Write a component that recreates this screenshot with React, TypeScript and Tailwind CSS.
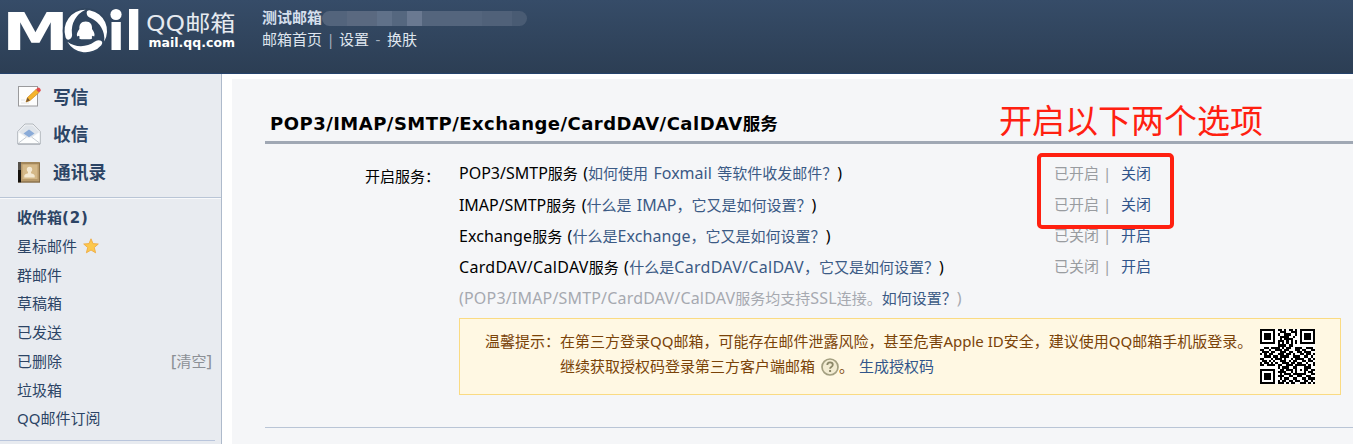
import React from "react";

const QR = [
  "1111111011010110101111111",
  "1000001001110011101000001",
  "1011101010011100101011101",
  "1011101001111001001011101",
  "1011101001011110001011101",
  "1000001011101010101000001",
  "1111111010101010101111111",
  "0000000011110110000000000",
  "0011011110101100111001110",
  "1100100111011000110110011",
  "0111011001110110011011100",
  "1010110011101101001101101",
  "0011101101111001110011010",
  "1100010111010010111100101",
  "0110101001110101100110110",
  "1011010100111011011001001",
  "1101111011001110111110101",
  "0000000010111001100011100",
  "1111111001101110101011011",
  "1000001011110010100010110",
  "1011101001011101111110011",
  "1011101011100110011001100",
  "1011101001011001100110111",
  "1000001010110110110011010",
  "1111111011101011001110101",
];

/** Mixed-script text: Latin runs get their own size next to the ideographs. */
function Mixed({ text, latin = "text-[16px]" }: { text: string; latin?: string }) {
  return (
    <>
      {text.split(/([\x21-\x7e]+(?: [\x21-\x7e]+)*)/).map((part, i) =>
        i % 2 === 1 ? (
          <span key={i} className={latin}>
            {part}
          </span>
        ) : (
          part
        ),
      )}
    </>
  );
}

function Logo() {
  const blade = "M1 -17.5 Q.6 -21 4.5 -20.6 A21 21 0 0 1 18.5 10.5 A23 23 0 0 0 5 -13 Q1.3 -14.2 1 -17.5Z";
  return (
    <svg width="252" height="60" viewBox="0 0 252 60" className="shrink-0 overflow-visible" fill="#fff">
      <g transform="translate(2 50) scale(1.32 1)">
        <text fontSize="51" fontWeight="700" fontFamily="DejaVu Sans">M</text>
      </g>
      <circle cx="85.7" cy="31" r="23" fill="#31465f" />
      <g transform="translate(85.7 31)">
        <path d={blade} />
        <path d={blade} transform="rotate(120)" />
        <path d={blade} transform="rotate(240)" />
        <path d="M0 -9.5 C4.8 -9.5 6.8 -6 6.3 -2 C8.3 0.5 9.5 3.5 8.5 5.5 L6.8 4.8 L6 6 C7.5 8.3 5 8.3 0 8.3 C-5 8.3 -7.5 8.3 -6 6 L-6.8 4.8 L-8.5 5.5 C-9.5 3.5 -8.3 0.5 -6.3 -2 C-6.8 -6 -4.8 -9.5 0 -9.5Z" />
      </g>
      <circle cx="116" cy="14.5" r="5.6" />
      <rect x="111.5" y="22" width="9.3" height="28" />
      <rect x="129" y="9" width="9.3" height="41" />
      <text x="146" y="30.5" fontSize="22" textLength="89.5" lengthAdjust="spacingAndGlyphs" fontFamily="Noto Sans, Noto Sans CJK SC, sans-serif" fill="#e6eaf0">QQ邮箱</text>
      <text x="148.5" y="47.3" fontSize="12.5" fontWeight="700" textLength="86.5" fontFamily="DejaVu Sans">mail.qq.com</text>
    </svg>
  );
}

function PencilIcon() {
  return (
    <svg width="24" height="24" viewBox="0 0 24 24">
      <rect x="1.5" y="1.5" width="19" height="19.5" fill="#fdfdfd" stroke="#9a9a9c" />
      <path d="M4 18H12M4 15H8" stroke="#e4e4e4" />
      <path d="M9 17 L10.5 12.5 L19 4.5 L22 7.5 L13 15.5Z" fill="#f5b42c" stroke="#cf8a22" strokeWidth=".7" />
      <path d="M9 17 L10.5 12.5 L13 15.5Z" fill="#7a5a35" />
      <path d="M19 4.5 L20.8 2.6 Q23.8 3 23.8 5.8 L22 7.5Z" fill="#e24b4b" />
    </svg>
  );
}

function EnvelopeIcon() {
  return (
    <svg width="24" height="24" viewBox="0 0 24 24">
      <path d="M.7 9.5 L8 2 H16 L23.3 9.5 V22 H.7Z" fill="#f1f3f5" stroke="#b3b8be" />
      <path d="M2 10 L8.5 3.5 H15.5 L22 10 L12 17Z" fill="#dfe4ea" />
      <path d="M1.5 10.5 L9 15.5 H15 L22.5 10.5 V21.5 H1.5Z" fill="#fff" fillOpacity=".85" />
      <path d="M1.5 21 L9.5 15 M22.5 21 L14.5 15" stroke="#c7cdd4" />
      <path d="M1 22H23" stroke="#9ea5ad" />
      <path d="M6.5 11.5 L12 7.5 L17.5 11.5 L12 15.3Z" fill="#8aabd8" />
    </svg>
  );
}

function ContactsIcon() {
  return (
    <svg width="24" height="24" viewBox="0 0 24 24">
      <rect x="1" y="2" width="22" height="20.5" fill="#b99b6c" />
      <rect x="1" y="2" width="3" height="20.5" fill="#15120e" />
      <rect x="1" y="2" width="3" height="8" fill="#56514a" />
      <path d="M4 3H22.5V22" fill="none" stroke="#8d744c" />
      <rect x="5.5" y="4.5" width="15" height="14.5" fill="#d4b888" />
      <circle cx="12.5" cy="9.5" r="2.7" fill="#f4e9d3" />
      <path d="M7.3 17.5 V15.5 Q7.5 14 11 13.3 V11 H14 V13.3 Q17.5 14 17.7 15.5 V17.5Z" fill="#f4e9d3" />
      <path d="M4 22H23" stroke="#776141" />
    </svg>
  );
}

function Star() {
  return (
    <svg width="16" height="16" viewBox="0 0 16 16" className="ml-[6px]">
      <path d="M8 .8 L10 5.6 L15.3 6 L11.3 9.5 L12.6 14.8 L8 12 L3.4 14.8 L4.7 9.5 L.7 6 L6 5.6Z" fill="#fcc84d" stroke="#efac43" strokeWidth=".9" />
    </svg>
  );
}

const services = [
  { h: "h-[32px]", latin: "text-[16px]", name: "POP3/SMTP服务", help: "如何使用 Foxmail 等软件收发邮件？", on: true },
  { h: "h-[31px]", latin: "text-[16px] tracking-[-0.05px]", name: "IMAP/SMTP服务", help: "什么是 IMAP，它又是如何设置？", on: true },
  { h: "h-[31px]", latin: "text-[16px] tracking-[0.1px]", name: "Exchange服务", help: "什么是Exchange，它又是如何设置？", on: false },
  { h: "h-[31px]", latin: "text-[16px] tracking-[0.3px]", name: "CardDAV/CalDAV服务", help: "什么是CardDAV/CalDAV，它又是如何设置？", on: false },
];

const actions = [
  { icon: <PencilIcon />, label: "写信" },
  { icon: <EnvelopeIcon />, label: "收信" },
  { icon: <ContactsIcon />, label: "通讯录" },
];

const folders = ["收件箱(2)", "星标邮件", "群邮件", "草稿箱", "已发送", "已删除", "垃圾箱", "QQ邮件订阅"];

export default function App() {
  return (
    <div className="flex h-[444px] w-[1353px] flex-col overflow-hidden bg-white font-['Noto_Sans','Noto_Sans_CJK_SC',sans-serif] text-[15px] whitespace-pre">
      <header className="flex h-[74px] shrink-0 border-b border-[#25426b] bg-linear-to-b from-[#364c68] to-[#2c3e54] text-[#dfe5ee]">
        <Logo />
        <div className="flex flex-col pt-[7px] pl-[10px]">
          <div className="flex h-[21px] items-center">
            <span className="font-bold text-[#d5dfec]">测试邮箱</span>
            <div className="mt-[2px] flex h-[15px] overflow-hidden rounded-full">
              <i className="w-[25px] bg-[#53647c]" />
              <i className="w-[30px] bg-[#5a6980]" />
              <i className="w-[15px] bg-[#607189]" />
              <i className="w-[15px] bg-[#55677f]" />
              <i className="w-[15px] bg-[#6a7991]" />
              <i className="w-[60px] bg-[#54657d]" />
              <i className="w-[30px] bg-[#506179]" />
              <i className="w-[15px] bg-[#495b73]" />
            </div>
          </div>
          <div className="flex h-[22px] items-center">
            <span>邮箱首页</span>
            <span className="w-[17px] text-center text-[#a5b0be]">|</span>
            <span>设置</span>
            <span className="w-[18px] text-center text-[#a5b0be]">-</span>
            <span>换肤</span>
          </div>
        </div>
      </header>

      <div className="flex min-h-0 flex-1">
        <aside className="flex w-[222px] shrink-0 flex-col border-r border-[#aebacb] bg-[#e8ebf0] text-[#2c4465]">
          <nav className="flex h-[124px] flex-col border-b border-[#b9c5d6] pt-[4px] pl-[17px]">
            {actions.map((a) => (
              <div key={a.label} className="flex h-[37.6px] items-center gap-[12px] text-[17.7px] font-bold">
                {a.icon}
                {a.label}
              </div>
            ))}
          </nav>
          <div className="flex flex-col border-t border-[#f8f9fb] pt-[4px] pl-[17px]">
            {folders.map((f, i) => (
              <div key={f} className={`flex h-[28.75px] items-center pr-[9px] ${i === 0 ? "font-bold" : ""}`}>
                <span>
                  <Mixed text={f} latin={i === 0 ? "font-['DejaVu_Sans'] text-[15px] tracking-[0.9px]" : "text-[15px]"} />
                </span>
                {i === 1 && <Star />}
                {i === 5 && (
                  <span className="ml-auto text-[#8c9096]">
                    <Mixed text="[清空]" latin="text-[17px]" />
                  </span>
                )}
              </div>
            ))}
          </div>
          <div className="mt-[7px] w-[215px] border-t border-[#b9c5dc]" />
        </aside>

        <main className="relative mt-[5px] ml-[10px] flex-1 bg-[#f5f6f8] pl-[33px] text-black">
          <h1 className="flex h-[65px] items-end border-b-[3px] border-[#a0a8b4] pb-[3px] pl-[5px] text-[17.5px] leading-[28px] font-bold">
            <span>
              <Mixed text="POP3/IMAP/SMTP/Exchange/CardDAV/CalDAV服务" latin="font-['DejaVu_Sans'] text-[18px] tracking-[0.48px]" />
            </span>
          </h1>

          <div className="flex">
            <div className="w-[194px] pt-[21px] pl-[100px] leading-[22px]">开启服务：</div>
            <div className="flex-1 pt-[13px]">
              {services.map((s) => (
                <div key={s.name} className={`flex items-center ${s.h}`}>
                  <div className="w-[595px] [word-spacing:1.5px]">
                    <Mixed text={s.name + " ("} latin={s.latin} />
                    <span className="text-[#3b5a85]">
                      <Mixed text={s.help} latin={s.latin} />
                    </span>
                    <Mixed text=")" />
                  </div>
                  <span className="w-[67px] text-[#999ca0]">
                    {s.on ? "已开启" : "已关闭"}
                    <span className="ml-[4px]">|</span>
                  </span>
                  <span className="text-[#31558a]">{s.on ? "关闭" : "开启"}</span>
                </div>
              ))}
              <div className="flex h-[31px] items-center text-[#a6a9b0]">
                <div>
                  <Mixed text="(POP3/IMAP/SMTP/CardDAV/CalDAV服务均支持SSL连接。" latin="text-[16px] tracking-[0.18px]" />
                  <span className="text-[#3b5a85]">如何设置？</span>
                  <Mixed text=")" />
                </div>
              </div>

              <div className="mt-[5px] flex h-[77px] w-[882px] border border-[#fadb83] bg-[#fff8e3] text-[#7a4308]">
                <div className="w-[75px] pt-[10px] pl-[25px] leading-[25px]">
                  <span>温馨提示：</span>
                </div>
                <div className="ml-[25px] w-[700px] pt-[10px] leading-[25px]">
                  <div>在第三方登录QQ邮箱，可能存在邮件泄露风险，甚至危害Apple ID安全，建议使用QQ邮箱手机版登录。</div>
                  <div className="flex items-center">
                    继续获取授权码登录第三方客户端邮箱
                    <svg width="18" height="18" viewBox="0 0 18 18" className="ml-[6px]">
                      <circle cx="9" cy="9" r="8" fill="#f3ecd2" stroke="#a39f80" strokeWidth="1.7" />
                      <path d="M6.3 7 Q6.3 4.4 9 4.4 Q11.8 4.4 11.8 6.8 Q11.8 8 10.3 8.9 Q9.1 9.6 9.1 10.7" fill="none" stroke="#8b8768" strokeWidth="1.8" />
                      <rect x="8.1" y="12" width="2" height="2" fill="#8b8768" />
                    </svg>
                    <span>。</span>
                    <span className="ml-[5px] text-[#31558a]">生成授权码</span>
                  </div>
                </div>
                <svg width="55" height="55" viewBox="0 0 25 25" className="mt-[10px]" shapeRendering="crispEdges">
                  <rect width="25" height="25" fill="#fff" />
                  {QR.flatMap((row, y) =>
                    [...row].map((c, x) => (c === "1" ? <rect key={`${x}-${y}`} x={x} y={y} width="1" height="1" /> : null)),
                  )}
                </svg>
              </div>
            </div>
          </div>
          <div className="mt-[32px] border-t border-[#b9c5d6]" />

          <div className="absolute top-[18px] left-[767px] text-[33px] leading-[48px] text-[#ff2010]">开启以下两个选项</div>
          <div className="absolute top-[74px] left-[805px] h-[76px] w-[137px] rounded-[5px] border-4 border-[#ff2010]" />
        </main>
      </div>
    </div>
  );
}
